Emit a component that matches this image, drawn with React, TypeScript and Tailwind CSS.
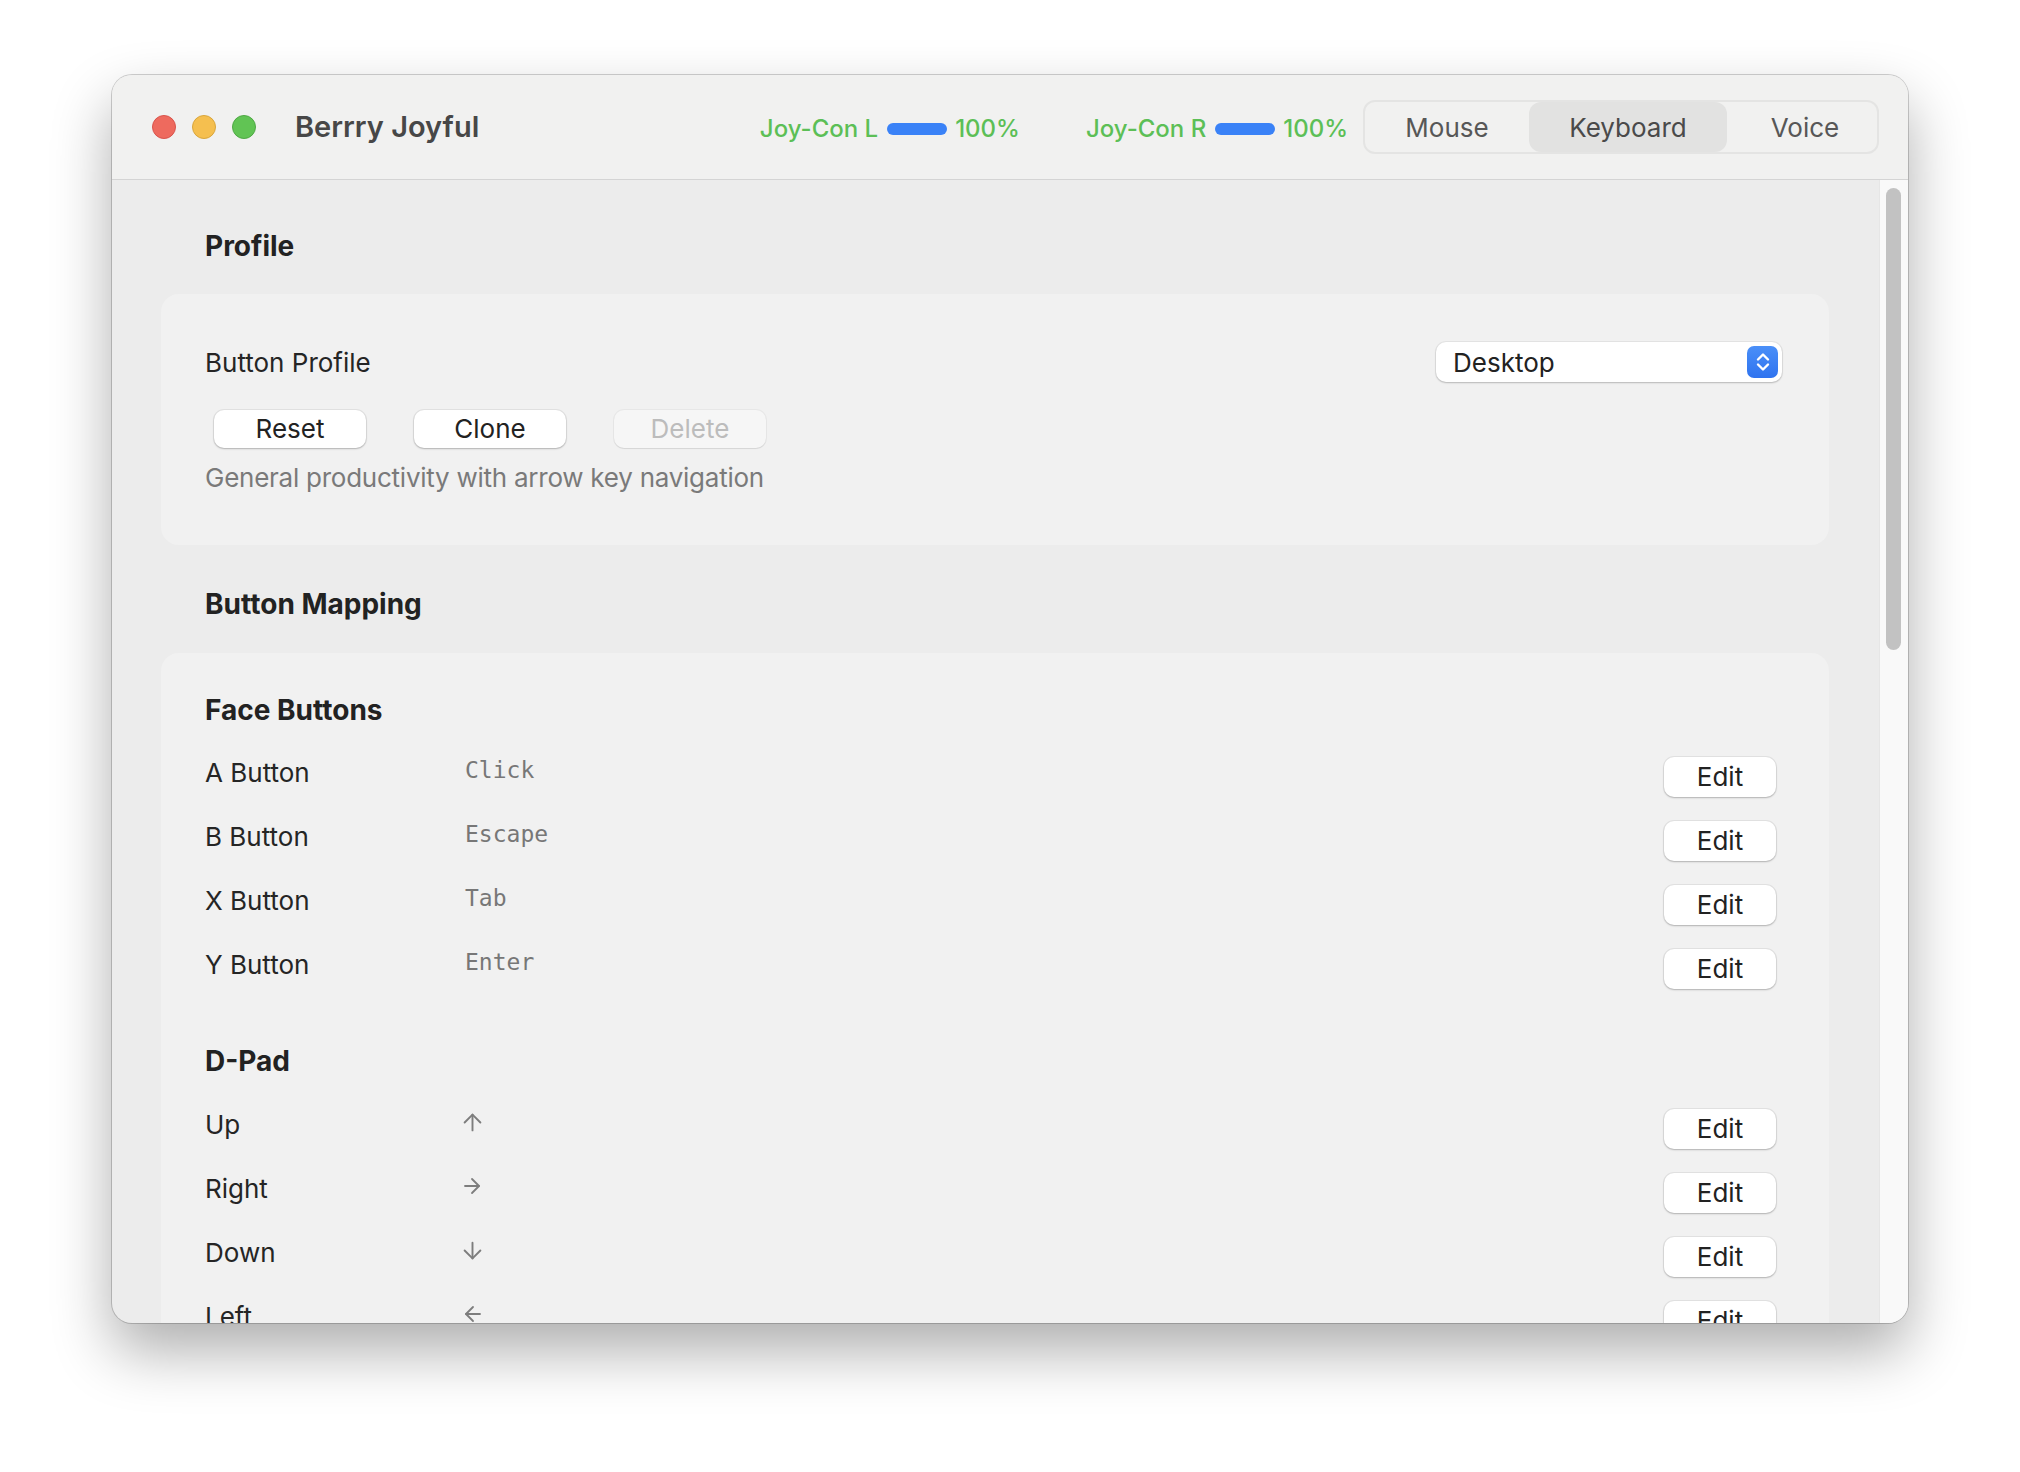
import React from "react";
import { ArrowDown, ArrowLeft, ArrowRight, ArrowUp } from "lucide-react";

const sans = "font-['Inter','Noto_Sans',sans-serif]";
const mono = "font-['DejaVu_Sans_Mono','Liberation_Mono',monospace]";

type Mapping = { label: string; value: React.ReactNode };

const faceButtons: Mapping[] = [
  { label: "A Button", value: "Click" },
  { label: "B Button", value: "Escape" },
  { label: "X Button", value: "Tab" },
  { label: "Y Button", value: "Enter" },
];

const arrow = "text-[#7d7d7d]";

const dpad: Mapping[] = [
  { label: "Up", value: <ArrowUp size={27} strokeWidth={1.7} className={`${arrow} -ml-[6px]`} aria-label="↑" /> },
  { label: "Right", value: <ArrowRight size={24} strokeWidth={1.8} className={`${arrow} -ml-[5px]`} aria-label="→" /> },
  { label: "Down", value: <ArrowDown size={27} strokeWidth={1.7} className={`${arrow} -ml-[6px]`} aria-label="↓" /> },
  { label: "Left", value: <ArrowLeft size={24} strokeWidth={1.8} className={`${arrow} -ml-[4px]`} aria-label="←" /> },
];

const Battery = ({ name }: { name: string }) => (
  <div className="flex items-center text-[24px] font-medium text-[#5cbf56]">
    <span>{name}</span>
    <span className="ml-[9px] h-[12px] w-[60px] rounded-full bg-[#3a82f7]" />
    <span className="ml-[8px]">100%</span>
  </div>
);

const PushButton = ({
  children,
  disabled,
  className = "",
}: {
  children: React.ReactNode;
  disabled?: boolean;
  className?: string;
}) => (
  <button
    className={`flex items-center justify-center rounded-[10px] text-[26px] leading-none ${
      disabled
        ? "bg-[#f6f6f6] text-[#bcbcbc] shadow-[0_0_0_1px_rgba(0,0,0,0.04),0_1px_1px_rgba(0,0,0,0.08)]"
        : "bg-white text-[#222] shadow-[0_0_0_1px_rgba(0,0,0,0.06),0_1px_2px_rgba(0,0,0,0.22)]"
    } ${className}`}
  >
    {children}
  </button>
);

const MappingRow = ({ label, value }: Mapping) => (
  <div className="flex h-[64px] items-center">
    <span className="w-[260px] text-[26px] text-[#252525]">{label}</span>
    <span className={`${mono} -mt-[4px] flex min-w-[20px] items-center text-[23px] text-[#777]`}>{value}</span>
    <PushButton className="mt-[10px] ml-auto mr-[6px] h-[40px] w-[112px]">Edit</PushButton>
  </div>
);

const Stepper = () => (
  <div className="flex h-[32px] w-[31px] items-center justify-center rounded-[7px] bg-gradient-to-b from-[#4a8ff8] to-[#2f73ef]">
    <svg width="16" height="24" viewBox="0 0 16 24" fill="none">
      <path d="M3 9.5 8 4.5l5 5" stroke="white" strokeWidth="2.4" strokeLinecap="round" strokeLinejoin="round" />
      <path d="M3 14.5 8 19.5l5-5" stroke="white" strokeWidth="2.4" strokeLinecap="round" strokeLinejoin="round" />
    </svg>
  </div>
);

export default function App() {
  return (
    <div className={`${sans} h-[1472px] w-[2020px] bg-white pl-[112px] pt-[75px]`}>
      <div className="flex h-[1248px] w-[1796px] flex-col overflow-hidden rounded-[20px] bg-[#ececec] shadow-[0_0_0_1px_rgba(0,0,0,0.18),0_28px_60px_rgba(0,0,0,0.32)]">
        {/* title bar */}
        <div className="flex h-[105px] shrink-0 items-center border-b border-[#d4d4d4] bg-[#f1f1f0] pl-[40px] pr-[29px]">
          <div className="flex gap-[16px]">
            <span className="h-[24px] w-[24px] rounded-full border border-[#d9544c] bg-[#ee6a5e]" />
            <span className="h-[24px] w-[24px] rounded-full border border-[#d9a63c] bg-[#f5bf4f]" />
            <span className="h-[24px] w-[24px] rounded-full border border-[#4fa845] bg-[#61c454]" />
          </div>
          <span className="ml-[39px] text-[29px] font-semibold text-[#474747]">Berrry Joyful</span>
          <div className="ml-auto flex items-center">
            <div className="mt-[3px] flex items-center">
              <Battery name="Joy-Con L" />
              <div className="ml-[66px]">
                <Battery name="Joy-Con R" />
              </div>
            </div>
            <div className="ml-[15px] flex h-[54px] rounded-[12px] border-2 border-[#e4e4e3] text-[26px] text-[#575757]">
              <div className="flex w-[164px] items-center justify-center">Mouse</div>
              <div className="flex w-[198px] items-center justify-center rounded-[12px] bg-[#e2e2e1] text-[#4a4a4a]">
                Keyboard
              </div>
              <div className="flex w-[150px] items-center justify-center pl-[6px]">Voice</div>
            </div>
          </div>
        </div>

        {/* content */}
        <div className="flex min-h-0 flex-1">
          <div className="min-w-0 flex-1 overflow-hidden pl-[49px] pr-[50px]">
            <h2 className="ml-[44px] mt-[46px] flex h-[40px] items-center text-[28px] font-bold text-[#222]">Profile</h2>
            <div className="mt-[28px] rounded-[18px] bg-[#f1f1f1] pb-[53px] pl-[44px] pr-[47px] pt-[48px]">
              <div className="flex h-[40px] items-center">
                <span className="text-[26px] text-[#252525]">Button Profile</span>
                <div className="ml-auto flex h-[40px] w-[346px] items-center rounded-[10px] bg-white pl-[17px] pr-[4px] shadow-[0_0_0_1px_rgba(0,0,0,0.05),0_1px_2px_rgba(0,0,0,0.2)]">
                  <span className="text-[26px] text-[#222]">Desktop</span>
                  <div className="ml-auto">
                    <Stepper />
                  </div>
                </div>
              </div>
              <div className="mt-[28px] flex gap-[48px] pl-[9px]">
                <PushButton className="h-[38px] w-[152px]">Reset</PushButton>
                <PushButton className="h-[38px] w-[152px]">Clone</PushButton>
                <PushButton disabled className="h-[38px] w-[152px]">
                  Delete
                </PushButton>
              </div>
              <p className="mt-[14px] flex h-[30px] items-center text-[26px] tracking-[-0.25px] text-[#7a7a7a]">
                General productivity with arrow key navigation
              </p>
            </div>

            <h2 className="ml-[44px] mt-[39px] flex h-[40px] items-center text-[28px] font-bold text-[#222]">
              Button Mapping
            </h2>
            <div className="mt-[29px] rounded-t-[18px] bg-[#f1f1f1] pb-[40px] pl-[44px] pr-[47px] pt-[37px]">
              <h3 className="flex h-[40px] items-center text-[28px] font-bold text-[#222]">Face Buttons</h3>
              <div className="mt-[10px]">
                {faceButtons.map((m) => (
                  <MappingRow key={m.label} {...m} />
                ))}
              </div>
              <h3 className="mt-[45px] flex h-[40px] items-center text-[28px] font-bold text-[#222]">D-Pad</h3>
              <div className="mt-[11px]">
                {dpad.map((m) => (
                  <MappingRow key={m.label} {...m} />
                ))}
              </div>
            </div>
          </div>

          {/* scroll track */}
          <div className="w-[29px] shrink-0 border-l border-[#e6e6e6] bg-[#f9f9f9] pl-[6px] pt-[8px]">
            <div className="h-[462px] w-[15px] rounded-full bg-[#c2c2c2]" />
          </div>
        </div>
      </div>
    </div>
  );
}
